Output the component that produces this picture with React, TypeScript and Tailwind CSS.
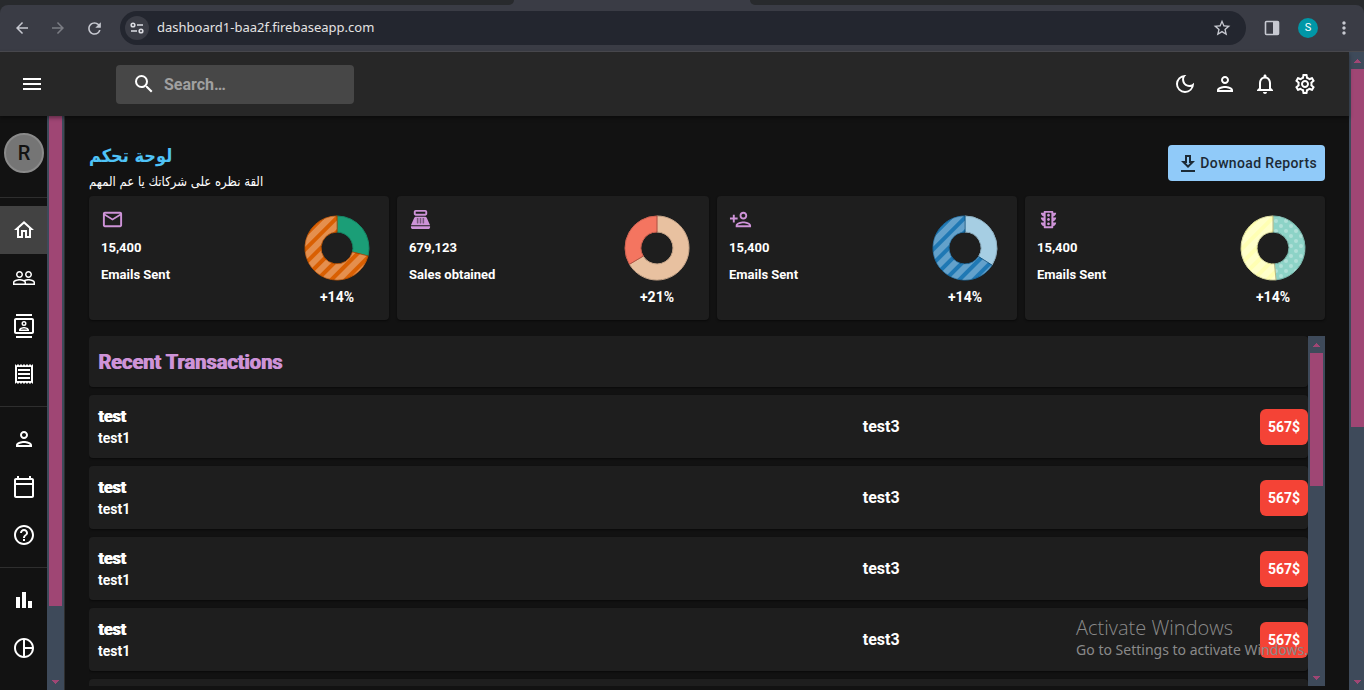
import React from "react";
import type { IconType } from "react-icons";
import {
  MdMenu, MdSearch, MdOutlineDarkMode, MdOutlinePerson, MdOutlineNotifications, MdOutlineSettings,
  MdOutlineHome, MdPeopleOutline, MdOutlineContacts, MdOutlineReceipt, MdOutlineCalendarToday,
  MdHelpOutline, MdBarChart, MdOutlinePieChartOutline, MdOutlineEmail, MdPointOfSale,
  MdOutlinePersonAdd, MdOutlineTraffic, MdArrowBack, MdArrowForward,
  MdRefresh, MdStarBorder, MdMoreVert,
} from "react-icons/md";

function Arrow({ down = false }: { down?: boolean }) {
  return (
    <svg width="17" height="17" viewBox="0 0 17 17" className="shrink-0" fill="#9f4674" shapeRendering="crispEdges">
      <path d={down ? "M5 7h7l-3.5 4z" : "M5 11h7l-3.5-4z"} />
    </svg>
  );
}

function ScrollTrack({ up = true, down = true, thumb, className = "" }: { up?: boolean; down?: boolean; thumb: string; className?: string }) {
  return (
    <div aria-hidden="true" className={`flex flex-col shrink-0 overflow-hidden bg-[#3e4a5a] ${className}`}>
      {up && <Arrow />}
      <div className="flex-1 min-h-0 px-0.5">
        <div className={`w-[13px] bg-[#9f4674] ${thumb}`} />
      </div>
      {down && <Arrow down />}
    </div>
  );
}

function BrowserBar() {
  return (
    <div className="shrink-0 bg-[#282a2d]">
      <div className="h-[5px] flex bg-[#3a3c45]">
        <div className="w-[514px] rounded-br-lg bg-[#282a2d]" />
        <div className="w-[236px]" />
        <div className="flex-1 rounded-bl-lg bg-[#282a2d]" />
      </div>
      <div className="h-[47px] rounded-t-lg bg-[#3a3c45] border-b border-[#4b4b50] flex items-center pl-[13px] pr-[10px] text-[#c7c9d1]">
        <button aria-label="Back" className="mr-[18px]"><MdArrowBack size={18} /></button>
        <button aria-label="Forward" className="mr-[18px] text-[#7b7d84]"><MdArrowForward size={18} /></button>
        <button aria-label="Reload" className="mr-4"><MdRefresh size={19} /></button>
        <div className="flex-1 h-[34px] rounded-full bg-[#23262f] flex items-center pl-[5px] pr-[14px]">
          <button aria-label="Site information" className="size-6 rounded-full bg-[#3a3c45] flex items-center justify-center">
            <svg width="14" height="12" viewBox="0 0 14 12" fill="none" stroke="#dcdde3" strokeWidth="1.6">
              <circle cx="3" cy="3" r="1.8" /><path d="M7 3h6M1 9h6" /><circle cx="11" cy="9" r="1.8" />
            </svg>
          </button>
          <input aria-label="Address" readOnly value="dashboard1-baa2f.firebaseapp.com" className="flex-1 ml-2 bg-transparent outline-none text-[13px] text-[#e3e3e3] font-['Noto_Sans',sans-serif]" />
          <button aria-label="Bookmark"><MdStarBorder size={20} /></button>
        </div>
        <button aria-label="Side panel" className="ml-[18px]">
          <svg width="16" height="16" viewBox="0 0 16 16"><rect x="1.500" y="1.500" width="13" height="13" rx="1" fill="none" stroke="currentColor" strokeWidth="1.600" /><path d="M9 1.500h5.500v13H9z" fill="currentColor" /></svg>
        </button>
        <button className="ml-[18px] size-5 rounded-full bg-[#0097a7] text-white text-[11px] leading-5">S</button>
        <button aria-label="Menu" className="ml-4"><MdMoreVert size={20} /></button>
      </div>
    </div>
  );
}

function Header() {
  const actions: [string, IconType][] = [
    ["Theme", MdOutlineDarkMode], ["Profile", MdOutlinePerson], ["Notifications", MdOutlineNotifications], ["Settings", MdOutlineSettings],
  ];
  return (
    <header className="relative z-10 h-16 shrink-0 bg-[#272727] flex items-center pl-5 pr-6 shadow-[0_2px_4px_rgba(0,0,0,0.4)]">
      <button aria-label="Open drawer"><MdMenu size={24} /></button>
      <label className="ml-[72px] w-[238px] h-[39px] rounded bg-[#474747] flex items-center pl-4">
        <MdSearch size={24} />
        <input aria-label="Search" placeholder="Search…" className="ml-2 w-40 pt-0.5 bg-transparent outline-none font-bold text-base placeholder:text-[#a0a0a0]" />
      </label>
      <div className="ml-auto flex">
        {actions.map(([name, Icon]) => (
          <button key={name} aria-label={name} className="p-2"><Icon size={24} /></button>
        ))}
      </div>
    </header>
  );
}

const groups: [string, IconType][][] = [
  [["Dashboard", MdOutlineHome], ["Team", MdPeopleOutline], ["Contacts", MdOutlineContacts], ["Invoices", MdOutlineReceipt]],
  [["Profile", MdOutlinePerson], ["Calendar", MdOutlineCalendarToday], ["FAQ", MdHelpOutline]],
  [["Bar chart", MdBarChart], ["Pie chart", MdOutlinePieChartOutline]],
];

function Sidebar() {
  return (
    <aside className="flex shrink-0 border-r border-[#2e2e2e] overflow-hidden">
      <nav className="w-[47px] overflow-hidden">
        <div className="ml-1 mt-[17px] mb-6 size-10 rounded-full bg-[#757575] border-2 border-[#8a8a8a] text-[#121212] text-xl font-medium flex items-center justify-center">R</div>
        {groups.map((items, i) => (
          <ul key={i} className="border-t border-[#2e2e2e] py-2">
            {items.map(([name, Icon]) => (
              <li key={name}>
                <a href="#" aria-label={name} className={`flex h-12 w-12 items-center justify-center ${name === "Dashboard" ? "bg-[#424242]" : ""}`}>
                  <Icon size={24} />
                </a>
              </li>
            ))}
          </ul>
        ))}
      </nav>
      <ScrollTrack up={false} thumb="h-[490px]" className="w-[17px]" />
    </aside>
  );
}

const CX = 35, R0 = 16, R1 = 32;
function ring(from: number, to: number) {
  const p = (r: number, t: number) => `${CX + r * Math.sin(t * 2 * Math.PI)} ${CX - r * Math.cos(t * 2 * Math.PI)}`;
  const large = to - from > 0.5 ? 1 : 0;
  return `M${p(R1, from)}A${R1} ${R1} 0 ${large} 1 ${p(R1, to)}L${p(R0, to)}A${R0} ${R0} 0 ${large} 0 ${p(R0, from)}Z`;
}

type Stat = { icon: IconType; value: string; label: string; pct: string; split: number; a: string; b: string; pattern: "left" | "none" | "both" };
const stats: Stat[] = [
  { icon: MdOutlineEmail, value: "15,400", label: "Emails Sent", pct: "+14%", split: 0.29, a: "#1b9e77", b: "#d95f02", pattern: "left" },
  { icon: MdPointOfSale, value: "679,123", label: "Sales obtained", pct: "+21%", split: 0.665, a: "#e8c1a0", b: "#f47560", pattern: "none" },
  { icon: MdOutlinePersonAdd, value: "15,400", label: "Emails Sent", pct: "+14%", split: 0.34, a: "#a6cee3", b: "#1f78b4", pattern: "left" },
  { icon: MdOutlineTraffic, value: "15,400", label: "Emails Sent", pct: "+14%", split: 0.485, a: "#8dd3c7", b: "#ffffb3", pattern: "both" },
];

function Donut({ stat, id }: { stat: Stat; id: string }) {
  const first = ring(0, stat.split);
  const second = ring(stat.split, 1);
  return (
    <svg width="70" height="70" viewBox="0 0 70 70" strokeLinejoin="round">
      <defs>
        <pattern id={`${id}-lines`} width="10" height="10" patternUnits="userSpaceOnUse" patternTransform="rotate(45)">
          <rect width="6" height="10" fill="#fff" fillOpacity="0.3" />
        </pattern>
        <pattern id={`${id}-dots`} width="10" height="10" patternUnits="userSpaceOnUse">
          <circle cx="3" cy="3" r="2" fill="#fff" fillOpacity="0.3" /><circle cx="8" cy="8" r="2" fill="#fff" fillOpacity="0.3" />
        </pattern>
      </defs>
      <path d={first} fill={stat.a} stroke={stat.a} />
      {stat.pattern === "both" && <path d={first} fill={`url(#${id}-dots)`} />}
      <path d={second} fill={stat.b} stroke={stat.b} />
      {stat.pattern !== "none" && <path d={second} fill={`url(#${id}-lines)`} />}
      <path d={first} fill="none" stroke="#000" strokeOpacity="0.15" />
      <path d={second} fill="none" stroke="#000" strokeOpacity="0.15" />
    </svg>
  );
}

function StatCard({ stat, id }: { stat: Stat; id: string }) {
  const Icon = stat.icon;
  return (
    <article className="h-[124px] rounded bg-[#1e1e1e] shadow-[0_1px_2px_rgba(0,0,0,0.5)] px-3 pt-3 flex justify-between">
      <div className="text-[13px] leading-[19px] font-bold">
        <Icon size={23} className="text-[#ce93d8]" />
        <p className="mt-[7px]">{stat.value}</p>
        <p className="mt-2">{stat.label}</p>
      </div>
      <div className="w-20 pt-[5px] flex flex-col items-center">
        <Donut stat={stat} id={id} />
        <p className="mt-1 text-sm font-bold">{stat.pct}</p>
      </div>
    </article>
  );
}

export default function App() {
  return (
    <div className="relative h-screen overflow-hidden flex flex-col bg-[#121212] text-white font-[Roboto,'Liberation_Sans',sans-serif]">
      <BrowserBar />
      <div className="flex flex-1 min-h-0">
        <div className="flex-1 min-w-0 flex flex-col">
          <Header />
          <div className="flex flex-1 min-h-0">
            <Sidebar />
            <main className="flex-1 min-w-0 px-6 pt-6 overflow-hidden">
              <div className="flex justify-between h-14">
                <div>
                  <h1 lang="ar" dir="rtl" className="text-[18px] leading-8 font-bold text-[#4fc3f7] w-fit font-['DejaVu_Sans_Condensed','DejaVu_Sans',sans-serif]">لوحة تحكم</h1>
                  <p lang="ar" dir="rtl" className="text-[13px] leading-5 w-fit font-['DejaVu_Sans_Condensed','DejaVu_Sans',sans-serif]">القة نظره على شركاتك يا عم المهم</p>
                </div>
                <button className="mt-[5px] h-9 px-2 rounded bg-[#90caf9] text-[#1c2a36] text-sm font-medium tracking-wide flex items-center">
                  <svg width="24" height="24" viewBox="0 0 24 24" fill="currentColor">
                    <path d="M19 10h-4V4H9v6H5l7 7 7-7zm-8 2V6h2v6h1.170L12 14.170 9.830 12H11zm-6 7h14v2H5z" />
                  </svg>
                  Downoad Reports
                </button>
              </div>
              <section className="grid grid-cols-[300fr_312fr_300fr_300fr] gap-2">
                {stats.map((s, i) => <StatCard key={i} stat={s} id={`stat${i}`} />)}
              </section>
              <section className="mt-4 h-[350px] flex overflow-hidden">
                <div className="flex-1 flex flex-col gap-2 overflow-hidden">
                  <h2 className="shrink-0 h-[51px] rounded bg-[#1e1e1e] shadow-[0_1px_2px_rgba(0,0,0,0.5)] pl-[9px] text-xl leading-[53px] font-bold text-[#ce93d8] [text-shadow:1px_0_currentColor]">Recent Transactions</h2>
                  {[0, 1, 2, 3, 4].map((i) => (
                    <div key={i} className="shrink-0 h-[63px] rounded bg-[#1e1e1e] shadow-[0_1px_2px_rgba(0,0,0,0.5)] pl-[9px] flex items-center">
                      <div className="w-[63.2%]">
                        <p className="text-base leading-[22px] font-bold [text-shadow:1px_0_currentColor]">test</p>
                        <p className="text-sm leading-5 font-bold">test1</p>
                      </div>
                      <p className="text-base font-bold">test3</p>
                      <p className="ml-auto h-9 w-12 rounded-md bg-[#f44336] text-sm leading-9 font-bold text-center">567$</p>
                    </div>
                  ))}
                </div>
                <ScrollTrack thumb="h-[133px]" className="w-[17px]" />
              </section>
            </main>
          </div>
        </div>
        <ScrollTrack thumb="h-[358px]" className="w-[15px]" />
      </div>
      <div className="pointer-events-none absolute right-14 bottom-[30px] text-[#8a8a8a]">
        <p className="text-[20px] leading-[25px] font-light font-['Open_Sans',sans-serif]">Activate Windows</p>
        <p className="text-sm leading-5 font-['Noto_Sans',sans-serif]">Go to Settings to activate Windows.</p>
      </div>
    </div>
  );
}
